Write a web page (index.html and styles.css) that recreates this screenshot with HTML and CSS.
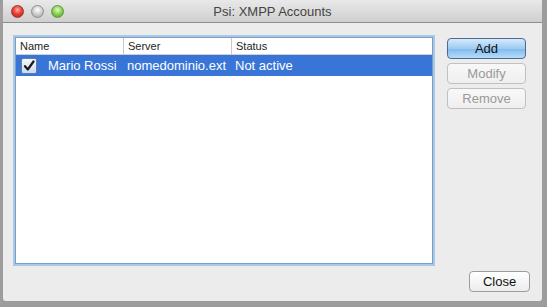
FILE: index.html
```html
<!DOCTYPE html>
<html lang="en">
<head>
    <meta charset="UTF-8">
    <title>Psi: XMPP Accounts</title>
    <link rel="stylesheet" href="styles.css">
</head>
<body>
    <div class="window">
        <div class="titlebar">
            <div class="lights">
                <span class="light red"></span>
                <span class="light gray"></span>
                <span class="light green"></span>
            </div>
            <div class="title">Psi: XMPP Accounts</div>
        </div>

        <div class="content">
            <div class="main-row">
                <div class="list">
                    <div class="list-header">
                        <div class="col col-name">Name</div>
                        <div class="col col-server">Server</div>
                        <div class="col col-status">Status</div>
                    </div>
                    <div class="list-row selected">
                        <div class="col col-name">
                            <span class="check">
                                <svg width="12" height="12" viewBox="0 0 12 12">
                                    <path d="M2 6.2 L4.8 9.5 L10.5 1.5" fill="none" stroke="#1a1a1a" stroke-width="2.2" stroke-linecap="round" stroke-linejoin="round"/>
                                </svg>
                            </span>
                            Mario Rossi
                        </div>
                        <div class="col col-server">nomedominio.ext</div>
                        <div class="col col-status">Not active</div>
                    </div>
                </div>

                <div class="side-buttons">
                    <button class="btn default">Add</button>
                    <button class="btn disabled">Modify</button>
                    <button class="btn disabled">Remove</button>
                </div>
            </div>

            <div class="bottom-row">
                <button class="btn close-btn">Close</button>
            </div>
        </div>
    </div>
</body>
</html>
```

FILE: styles.css
```css
body {
    margin: 0;
    width: 547px;
    height: 307px;
    background-color: #9d9d9d;
    font-family: 'Liberation Sans', Arial, sans-serif;
    overflow: hidden;
}

.window {
    margin-left: 3px;
    width: 539px;
    height: 301px;
    background-color: #ececec;
    border-radius: 0 0 3px 3px;
    display: flex;
    flex-direction: column;
}

/* Title bar */
.titlebar {
    height: 22px;
    background: linear-gradient(#e9e9e9, #cfcfcf);
    border-bottom: 1px solid #8e8e8e;
    display: flex;
    align-items: center;
    position: relative;
}

.lights {
    display: flex;
    gap: 7px;
    padding-left: 8px;
}

.light {
    width: 13px;
    height: 13px;
    border-radius: 50%;
    box-sizing: border-box;
}

.light.red {
    background: radial-gradient(circle at 50% 35%, #ffb0a8 0%, #e8423c 45%, #b21914 100%);
    border: 1px solid #a8332d;
}

.light.gray {
    background: radial-gradient(circle at 50% 35%, #ffffff 0%, #d3d3d3 45%, #9e9e9e 100%);
    border: 1px solid #8e8e8e;
}

.light.green {
    background: radial-gradient(circle at 50% 35%, #e2ffc8 0%, #8fd25a 45%, #4f9a22 100%);
    border: 1px solid #5d9a3a;
}

.title {
    position: absolute;
    left: 0;
    right: 0;
    text-align: center;
    font-size: 13px;
    color: #444;
    pointer-events: none;
}

/* Content */
.content {
    flex-grow: 1;
    display: flex;
    flex-direction: column;
    padding: 14px 12px 9px 10px;
}

.main-row {
    display: flex;
    gap: 14px;
}

.list {
    width: 418px;
    height: 227px;
    background-color: #fff;
    border: 1px solid #7b9ec4;
    box-shadow: 0 0 0 2px #a9c7e6;
    box-sizing: border-box;
    margin-left: 2px;
}

.list-header {
    display: flex;
    height: 16px;
    border-bottom: 1px solid #d0d0d0;
    font-size: 11px;
    color: #1e1e1e;
    line-height: 16px;
}

.list-header .col {
    border-right: 1px solid #c8c8c8;
    padding-left: 4px;
    box-sizing: border-box;
}

.list-header .col-status {
    border-right: none;
}

.col-name {
    width: 108px;
}

.col-server {
    width: 108px;
}

.col-status {
    flex-grow: 1;
}

.list-row {
    display: flex;
    height: 21px;
    line-height: 21px;
    font-size: 13px;
}

.list-row.selected {
    background-color: #3875d7;
    color: #fff;
}

.list-row .col {
    padding-left: 3px;
    box-sizing: border-box;
    white-space: nowrap;
}

.list-row .col-name {
    display: flex;
    align-items: center;
    gap: 11px;
    padding-left: 5px;
}

.check {
    width: 14px;
    height: 14px;
    border: 1px solid #5f7fa6;
    border-radius: 2px;
    background: linear-gradient(#f4f8fd, #c9daf0);
    display: flex;
    align-items: center;
    justify-content: center;
}

/* Buttons */
.side-buttons {
    display: flex;
    flex-direction: column;
    gap: 4px;
    padding-top: 1px;
}

.btn {
    width: 79px;
    height: 21px;
    font-family: 'Liberation Sans', Arial, sans-serif;
    font-size: 13px;
    color: #111;
    background: linear-gradient(#ffffff, #ececec);
    border: 1px solid #9c9c9c;
    border-radius: 4px;
    padding: 0;
}

.btn.default {
    background: linear-gradient(#d6e9fb, #9dcbf3 50%, #7db9ee 51%, #b6dcf8);
    border-color: #4c6a91;
}

.btn.disabled {
    color: #9a9a9a;
    border-color: #c0c0c0;
    background: linear-gradient(#f8f8f8, #efefef);
}

.bottom-row {
    margin-top: auto;
    display: flex;
    justify-content: flex-end;
}

.close-btn {
    width: 61px;
}
```
